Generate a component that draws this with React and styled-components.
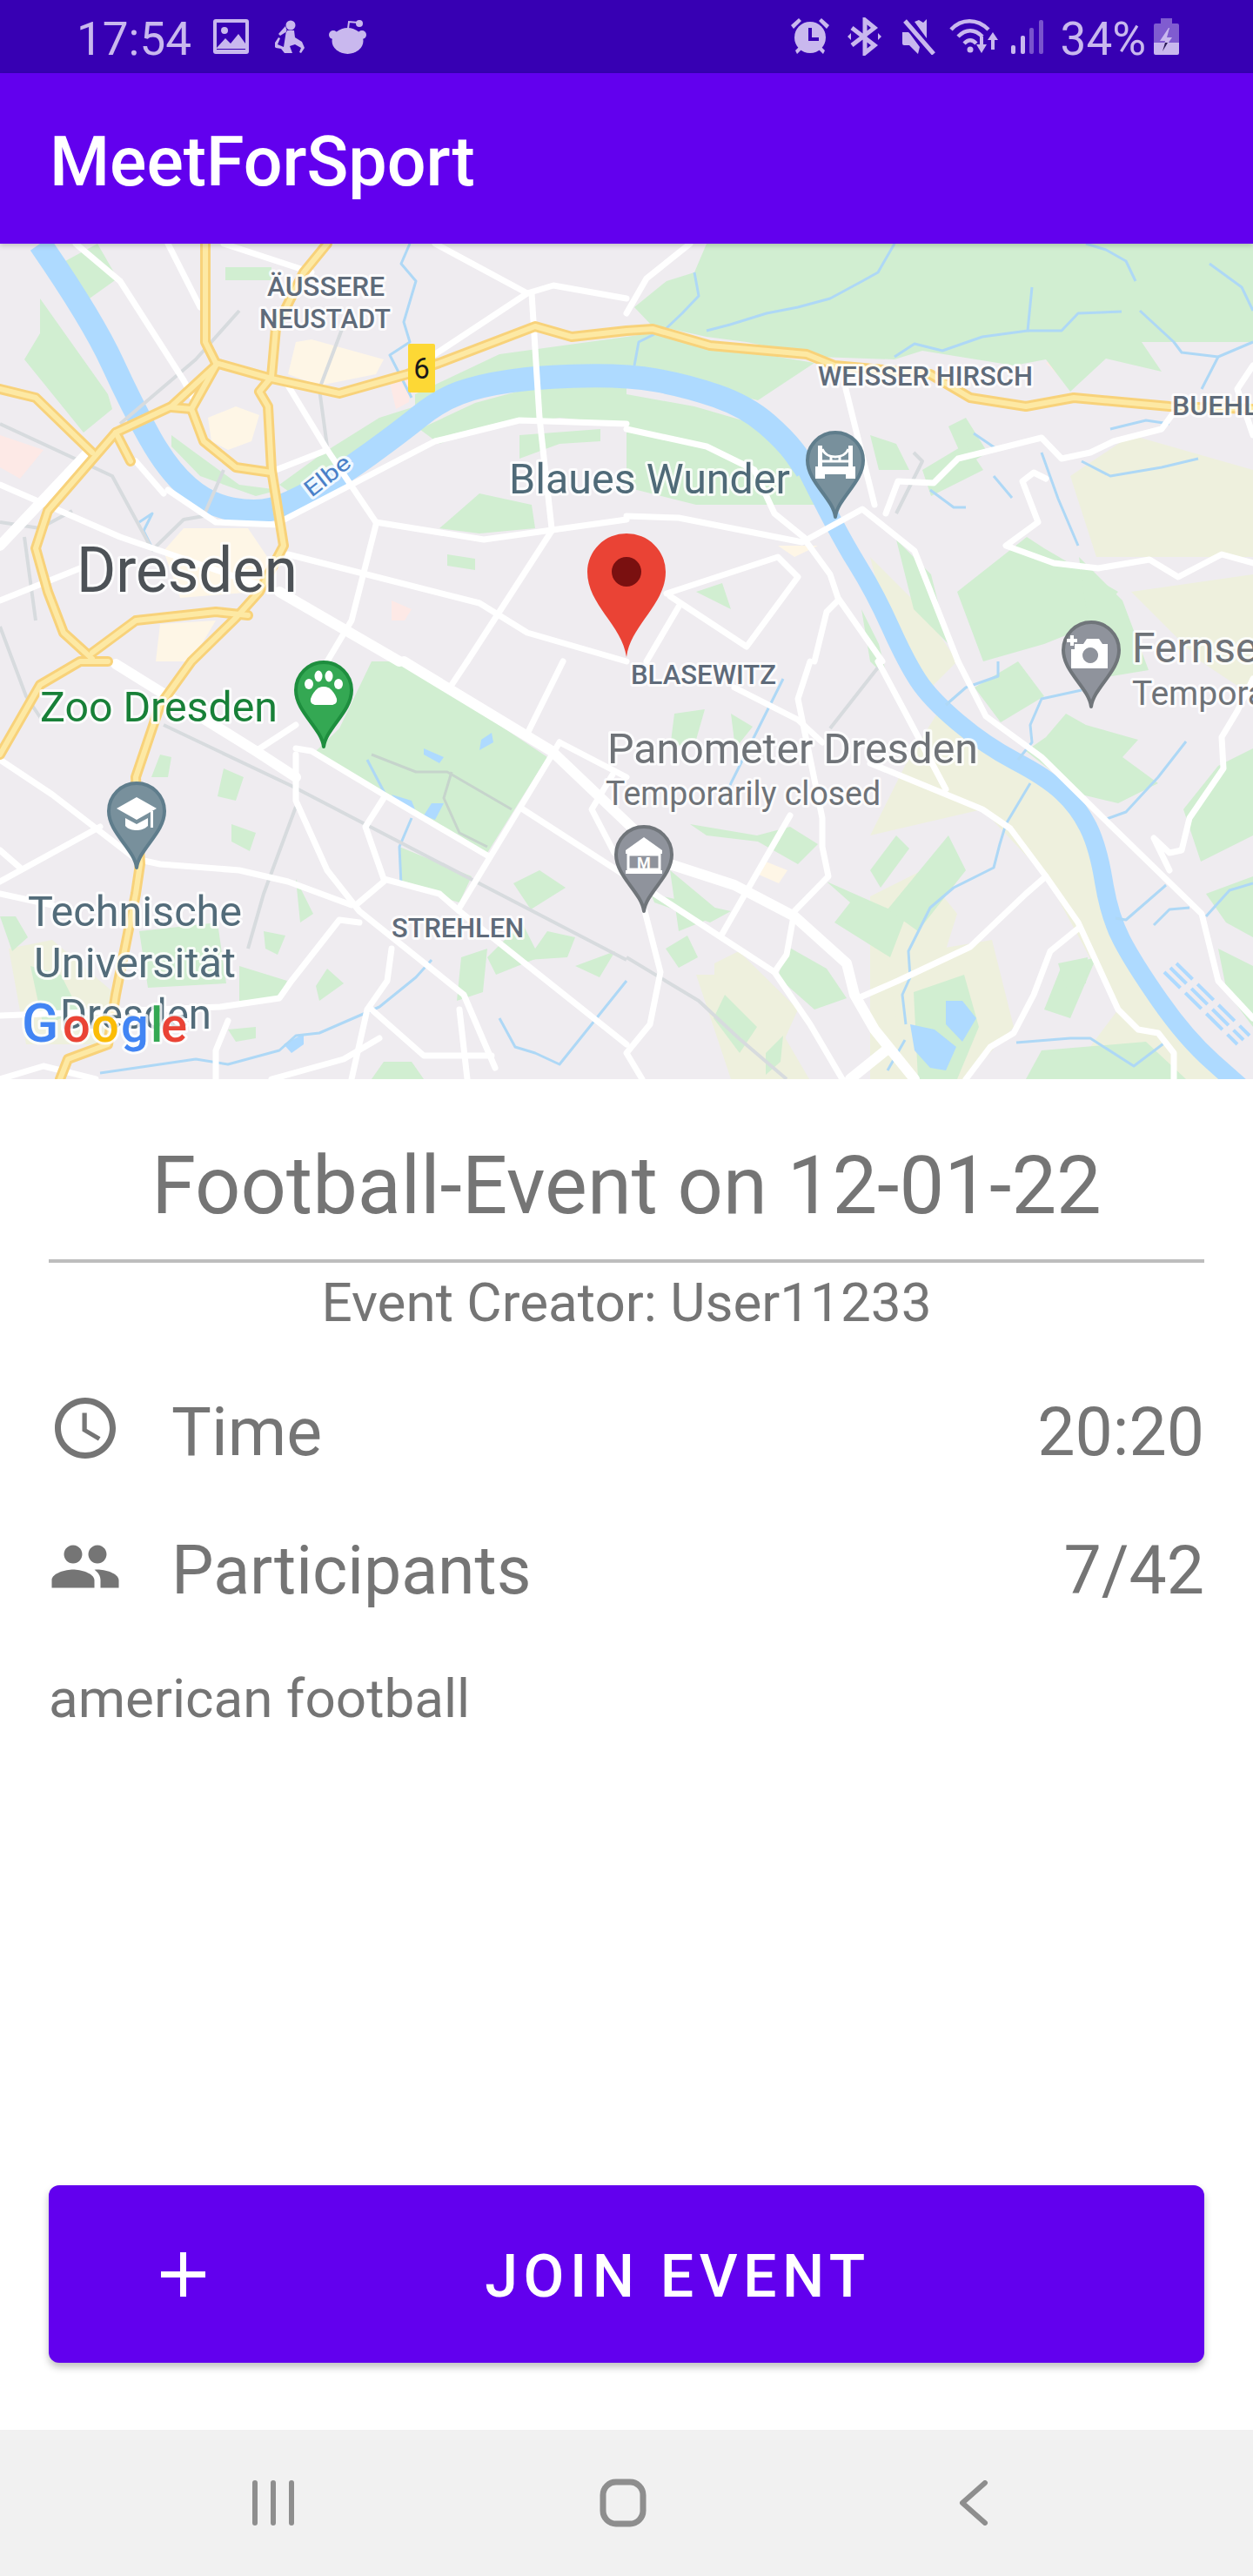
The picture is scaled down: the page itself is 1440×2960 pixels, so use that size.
import React from 'react';
import styled, { createGlobalStyle } from 'styled-components';
import { MdAccessTime, MdGroup } from 'react-icons/md';

const GlobalStyle = createGlobalStyle`
  html, body {
    margin: 0;
    padding: 0;
    background: #ffffff;
    font-family: Roboto, "Liberation Sans", sans-serif;
  }
`;

const Screen = styled.div`
  width: 1440px;
  height: 2960px;
  display: flex;
  flex-direction: column;
  overflow: hidden;
  background: #ffffff;
`;

const StatusBar = styled.div`
  height: 84px;
  flex: none;
  display: flex;
  align-items: center;
  justify-content: space-between;
  padding: 0 85px 0 88px;
  background: #3700b3;
  color: #c9b8ee;
`;

const StatusGroup = styled.div`
  display: flex;
  align-items: center;
`;

const StatusText = styled.span`
  font-size: 53px;
  font-weight: 400;
  line-height: 60px;
  padding-top: 6px;
  margin-left: ${(p) => p.$ml || 0}px;
`;

const StatusIcon = styled.svg`
  display: block;
  flex: none;
  margin-left: ${(p) => p.$ml || 0}px;
`;

const AppBar = styled.header`
  height: 196px;
  flex: none;
  position: relative;
  z-index: 2;
  display: flex;
  align-items: center;
  padding: 7px 0 0 57px;
  box-sizing: border-box;
  background: #6200ee;
  box-shadow: 0 2px 6px rgba(0, 0, 0, 0.2);
`;

const AppTitle = styled.h1`
  margin: 0;
  font-size: 79px;
  font-weight: 500;
  line-height: 92px;
  color: #ffffff;
`;

const MapFrame = styled.svg`
  display: block;
  width: 1440px;
  height: 960px;
  flex: none;
`;

const MapLabel = styled.text`
  font-family: Roboto, sans-serif;
  font-size: ${(p) => p.$size}px;
  font-weight: ${(p) => p.$weight || 400};
  fill: ${(p) => p.$color};
  stroke: rgba(255, 255, 255, 0.82);
  stroke-width: 6px;
  stroke-linejoin: round;
  paint-order: stroke;
`;

const Details = styled.main`
  flex: 1;
  display: flex;
  flex-direction: column;
  padding: 0 56px;
  color: #757575;
`;

const EventTitle = styled.h2`
  margin: 67px 0 0;
  font-size: 92px;
  font-weight: 400;
  line-height: 112px;
  text-align: center;
`;

const Divider = styled.hr`
  margin: 28px 0 0;
  height: 4px;
  border: none;
  background: #bdbdbd;
`;

const Creator = styled.div`
  margin-top: 11px;
  font-size: 62px;
  line-height: 70px;
  text-align: center;
`;

const InfoRow = styled.div`
  display: flex;
  align-items: center;
  height: 84px;
  margin-top: ${(p) => p.$mt}px;
`;

const InfoIcon = styled.span`
  width: 84px;
  height: 84px;
  flex: none;
  display: flex;
  font-size: 84px;
  color: #757575;
`;

const InfoLabel = styled.span`
  flex: 1;
  margin-left: 57px;
  padding-top: 10px;
  font-size: 77px;
  line-height: 88px;
`;

const InfoValue = styled.span`
  padding-top: 10px;
  font-size: 77px;
  line-height: 88px;
`;

const Description = styled.p`
  margin: 75px 0 0;
  font-size: 62px;
  line-height: 70px;
`;

const JoinButton = styled.button`
  margin: auto 0 77px;
  height: 204px;
  flex: none;
  display: flex;
  align-items: center;
  padding: 0 62px 0 129px;
  border: none;
  border-radius: 12px;
  background: #6200ee;
  color: #ffffff;
  font-family: Roboto, sans-serif;
  box-shadow: 0 5px 8px rgba(0, 0, 0, 0.25);
`;

const JoinLabel = styled.span`
  flex: 1;
  padding-top: 5px;
  text-align: center;
  font-size: 68px;
  font-weight: 500;
  letter-spacing: 6.5px;
  line-height: 80px;
`;

const NavBar = styled.nav`
  height: 168px;
  flex: none;
  display: flex;
  align-items: center;
  padding-left: 289px;
  background: #f1f1f1;
`;

const NavIcon = styled.svg`
  display: block;
  flex: none;
  margin-left: ${(p) => p.$ml || 0}px;
  fill: none;
  stroke: #8e8e8e;
  stroke-linecap: round;
  stroke-linejoin: round;
`;

// quadratic curve through midpoints, river and ponds look less jagged this way
const smooth = (pts) => {
  const p = pts.trim().split(/\s+/).map((s) => s.split(',').map(Number));
  let d = `M${p[0][0]} ${p[0][1]}`;
  for (let i = 1; i < p.length - 1; i++) {
    const mx = (p[i][0] + p[i + 1][0]) / 2;
    const my = (p[i][1] + p[i + 1][1]) / 2;
    d += ` Q${p[i][0]} ${p[i][1]} ${mx} ${my}`;
  }
  const last = p[p.length - 1];
  return `${d} L${last[0]} ${last[1]}`;
};

const cream = [
  '340,393 358,390 441,413 432,430 367,443 331,430',
  '239,480 271,467 298,477 289,507 262,517 243,507',
  '211,607 285,607 312,647 294,680 207,687 188,633',
  '184,717 248,713 220,760 179,760',
  '894,627 940,627 913,640',
  '880,990 905,1000 895,1015 872,1005',
];

const pink = [
  '0,500 50,517 23,550 0,537',
  '1202,417 1225,397 1243,415 1220,435',
  '450,690 473,700 465,713 450,713',
  '448,440 470,432 470,462 455,470',
];

const tan = [
  '1083,810 1239,927 1262,973 1275,1053 1303,1107 1363,1193 1418,1240 1225,1240 1285,1160 1202,1007 1129,930 1000,960 1040,880',
  '1000,1030 1060,1000 1100,1050 1040,1240 1000,1240',
  '1230,547 1300,500 1440,540 1440,640 1260,640',
  '800,1120 860,1120 930,1240 840,1240',
  '821,1107 849,1093 917,1160 899,1200 821,1143',
  '1020,1100 1140,1080 1165,1180 1110,1240 1040,1240',
  '10,1090 60,1080 130,1140 130,1200 30,1200',
  '1000,640 1060,700 1100,760 1060,800 1020,720',
  '1300,680 1440,660 1440,800 1380,760',
];

const green = [
  '812,280 1440,280 1440,393 1312,393 1335,427 1271,412 1230,450 1202,413 1165,420 1060,403 1028,413 940,410 858,393 812,387 748,373 729,353 766,323 798,313',
  '720,387 748,383 816,397 936,417 871,460 720,423',
  '477,453 574,407 720,387 720,423 620,423 551,437 477,467',
  '482,493 546,463 620,443 720,440 720,487 643,480 551,493 505,510',
  '720,453 798,467 867,487 908,520 927,557 936,580 800,580 780,575 720,560',
  '321,557 372,520 436,480 477,467 459,480 400,527 335,567',
  '197,500 220,517 275,557 321,563 294,570 230,547 197,513',
  '597,500 690,493 690,507 643,510 597,527',
  '514,637 546,642 546,655 514,650',
  '551,567 611,580 615,607 551,613 505,607',
  '46,343 124,453 129,470 96,497 28,413 46,383',
  '259,307 312,307 312,322 259,322',
  '75,300 112,280 135,320 100,345',
  '427,760 464,760 629,870 560,980 413,900 363,863 390,837',
  '459,973 542,1007 528,1037 459,1017',
  '257,883 280,893 271,920 250,915',
  '266,947 294,957 287,978 266,967',
  '303,1070 328,1075 319,1097 305,1090',
  '376,1113 395,1130 367,1150 363,1133',
  '275,1110 330,1127 321,1147 275,1150',
  '629,1070 661,1077 652,1100 606,1103',
  '707,1093 661,1110 689,1123',
  '184,867 197,870 193,893 174,893',
  '0,1053 18,1053 32,1077 14,1093',
  '262,1183 294,1180 294,1193 271,1197',
  '441,1220 473,1220 487,1240 427,1240',
  '1202,847 1225,820 1248,833 1308,850 1290,870 1331,900 1285,923 1243,913 1179,863',
  '950,1013 1041,1053 1023,1100 959,1060 977,1037',
  '904,1087 950,1113 973,1147 936,1160 894,1123',
  '1050,1140 1108,1120 1125,1180 1100,1240 1055,1240',
  '793,947 870,960 908,950 940,970 917,993 871,967 812,960',
  '748,1027 840,1047 816,1060 752,1037',
  '1386,1027 1440,1007 1440,1077 1409,1060',
  '1197,1207 1317,1197 1363,1240 1179,1240',
  '1020,1045 1090,960 1110,1000 1055,1070',
  '1180,617 1200,630 1285,680 1250,720 1200,740 1130,760 1100,680',
  '1030,620 1070,660 1090,740 1050,700',
  '1240,640 1290,690 1320,770 1260,780',
  '1120,790 1170,760 1200,800 1150,830',
  '1360,930 1400,880 1440,860 1440,960 1380,990',
  '1220,1110 1260,1100 1230,1170 1200,1160',
  '1000,500 1030,510 1045,540 1010,540',
  '1110,480 1135,520 1110,535 1090,490',
  '1060,540 1110,510 1130,540 1070,570',
  '770,1000 830,1050 780,1070',
  '800,550 830,560 810,580',
  '800,680 830,670 840,700',
  '833,1143 870,1180 850,1210 820,1170',
  '530,1100 560,1090 555,1140 525,1150',
  '35,1110 70,1120 90,1160 50,1180',
  '590,1015 620,1000 650,1020 610,1045',
  '1216,1107 1250,1100 1248,1130 1225,1135',
  '765,1090 790,1075 802,1100 780,1112',
  '775,820 810,815 800,850 770,860',
  '840,820 865,835 845,860',
  '880,1210 900,1190 897,1220 880,1235',
  '1000,1000 1030,960 1045,975 1012,1020',
  '990,700 1010,740 1020,780 1000,760',
  '1400,1090 1440,1110 1440,1180 1410,1140',
  '160,1070 250,1060 260,1130 170,1135',
  '340,1010 360,1050 345,1060',
  '560,1100 600,1060 620,1100 570,1120',
];

const ponds = [
  '1087,1150 1106,1150 1122,1170 1106,1197 1087,1177',
  '1046,1177 1074,1183 1099,1203 1087,1230 1069,1227 1051,1207',
  '496,923 510,923 500,942 487,937',
  '450,913 473,920 477,930 460,925',
  '487,860 510,870 505,877 487,867',
  '565,842 567,853 551,862 553,850',
  '326,1200 349,1188 349,1200 335,1210',
];

const streams = [
  '798,313 803,340 784,360 766,377 734,393 729,420',
  '1028,280 1009,313 991,323 954,343 917,353 881,360 839,373 812,380',
  '1248,280 1271,287 1294,300 1305,323',
  '1186,330 1181,380 1129,387 1083,403 1051,395 1028,410',
  '1181,380 1220,380 1239,360 1289,358',
  '1310,357 1349,393 1358,405 1400,410 1381,447',
  '1390,303 1427,330 1440,357',
  '1400,410 1440,393',
  '1243,530 1276,547 1335,537 1377,527',
  '1197,520 1216,573 1239,627',
  '1276,493 1317,483 1344,487',
  '1069,563 1096,583 1110,583',
  '1119,498 1147,517',
  '1142,547 1163,572',
  '471,280 461,303 478,323 464,370 471,393 448,408 473,457',
  '1156,947 1149,970 1142,997 1096,1020 1069,1043 1044,1093 1046,1123 1037,1143 1041,1177',
  '1184,900 1156,947',
  '1087,810 1110,790 1147,777 1147,760',
  '1243,793 1197,803 1184,833 1186,853 1170,873',
  '1363,852 1331,893 1294,933 1269,942',
  '1340,1017 1294,1057 1282,1055',
  '1326,1063 1344,1045 1367,1043',
  '1386,1053 1413,1023 1440,1015',
  '1168,1198 1230,1193 1253,1193 1303,1225 1340,1197',
  '473,940 459,973 461,1017',
  '496,1103 478,1123 436,1157 367,1187 340,1190 321,1207 262,1223 225,1217 115,1233',
  '574,1170 592,1203 615,1210 643,1223 720,1127',
  '422,873 445,917',
  '160,600 175,590 165,610 175,630',
  '900,780 840,900 830,925',
  '1020,1230 1040,1195',
];

const rails = [
  '188,833 335,903 720,1103',
  '720,1100 803,1150 849,1193 904,1240',
  '275,357 225,413 138,487',
  '0,487 129,547 174,630',
  '376,513 367,447 395,373',
  '174,633 211,597 234,593 257,540',
  '1009,767 954,837',
  '340,927 303,1027 285,1090',
  '0,600 46,607 83,587',
  '28,617 41,713',
  '1030,590 1060,530 1050,520',
  '0,720 30,800 50,830',
];

const parkPaths = [
  '427,867 478,887 514,887 588,930',
  '519,887 510,917 528,957 560,973',
];

const roads = [
  '87,280 138,323 211,437 225,463',
  '193,280 230,353',
  '257,280 358,313',
  '500,280 606,337 636,328 720,343',
  '606,337 500,407',
  '611,337 620,480 634,607',
  '331,443 376,517 432,600',
  '317,540 376,517',
  '321,600 500,507 597,483 720,487',
  '193,563 248,600 321,603',
  '156,530 188,567',
  '0,557 138,617 321,680',
  '0,690 92,653',
  '331,637 551,693 606,727 720,760',
  '432,600 556,620 720,597',
  '432,603 404,713 376,760',
  '634,610 537,760',
  '793,280 743,320 720,360',
  '720,493 812,513 867,540 890,590 927,620',
  '720,593 780,595 922,623 991,585 1051,633 1101,760',
  '927,623 954,660 963,687 1014,760',
  '766,682 894,640 917,663 858,743 770,685',
  '972,447 1005,580',
  '1018,590 1032,553 1073,555 1101,527 1197,503 1220,527 1253,520 1280,507 1335,493 1354,467',
  '1202,550 1188,543 1175,553 1193,600 1156,627 1211,647 1262,653 1321,643 1354,663 1404,637 1440,647',
  '1440,420 1422,447 1440,500',
  '963,690 950,703 936,760',
  '780,697 743,760',
  '931,760 917,803 945,940 945,973 952,1007 913,1047 904,1097 890,1117',
  '844,790 917,827 945,853',
  '1009,760 1041,820 1087,907',
  '1000,877 1129,930 1161,952 1202,1007 1239,1060 1285,1160 1308,1183 1331,1187 1349,1210 1349,1240',
  '752,1027 890,1117 931,1177 968,1240',
  '830,1073 908,937',
  '986,1147 1032,1127 1115,1088 1179,1027 1202,1007',
  '1239,1067 1207,1093 1188,1143 1165,1187 1138,1203 1110,1240',
  '741,1047 759,1117 747,1177 720,1210 738,1240',
  '1101,760 1133,823 1197,870 1271,943 1381,1050 1400,1127 1440,1170',
  '1440,780 1422,817 1404,847 1406,883 1367,940 1358,977 1344,980 1326,963 1344,1000',
  '537,760 519,787',
  '647,760 606,843',
  '643,853 528,1043',
  '601,930 720,1007',
  '643,853 720,893',
  '704,890 680,930 706,980',
  '0,873 60,913 156,987 184,993 275,1000 331,1013 404,1040',
  '0,1013 115,950',
  '0,977 23,997',
  '0,1027 60,1040',
  '294,863 340,833',
  '340,860 358,863 441,913 560,983',
  '340,867 340,920 376,1000 413,1047 533,1143 569,1227',
  '441,917 420,950 441,1010 505,1027 528,1047 720,1200',
  '441,1013 409,1040',
  '413,1060 390,1057 335,1127 321,1147 253,1157 0,1167',
  '450,1090 445,1127 422,1160 404,1240',
  '427,1160 487,1213 565,1213',
  '248,1240 248,1207 262,1173',
  '312,1240 395,1217 436,1193',
  '528,1160 537,1240',
  '0,1240 50,1225 110,1240',
];

const wideRoads = [
  '459,760 321,680',
  '0,627 101,520',
  '133,763 294,863 340,893',
  '464,760 634,863 720,945 770,993 844,1017 913,1053 973,1107 982,1143 1005,1183 1051,1240',
  '1018,1207 977,1240',
];

const highways = [
  '236,280 236,393 248,417 312,435 390,452 468,430 505,417 615,375 657,387 720,380 750,378 816,397 927,407 959,420 1069,430 1115,457 1179,467 1234,457 1344,467 1440,470',
  '376,280 349,313 317,377 312,433 298,450 308,467 312,540 326,627 298,680 271,710 220,760 184,810 156,893 161,993 156,1027 133,1143 124,1200 78,1217 69,1240',
  '248,420 197,467 133,497 55,587 41,630 55,680 73,727 106,757',
  '124,760 92,760 46,787 0,867',
  '0,447 41,457 106,520',
  '220,470 234,507 271,537 312,543',
  '248,420 220,470 197,468',
  '106,750 156,713 248,703 285,707',
  '133,497 150,530',
];

const Poly = ({ sets, ...rest }) => (
  <g {...rest}>
    {sets.map((pts) => (
      <polyline key={pts} points={pts} />
    ))}
  </g>
);

const Shapes = ({ sets, fill }) => (
  <g fill={fill}>
    {sets.map((pts) => (
      <polygon key={pts} points={pts} />
    ))}
  </g>
);

const Pin = ({ x, y, fill, edge, children }) => (
  <g transform={`translate(${x - 35} ${y})`}>
    <path
      d="M35 100C32 78 3 60 3 35a32 32 0 1 1 64 0C67 60 38 78 35 100Z"
      fill={fill}
      stroke={edge}
      strokeWidth="4"
      strokeLinejoin="round"
    />
    {children}
  </g>
);

const MapView = () => (
  <MapFrame viewBox="0 280 1440 960">
    <rect x="0" y="280" width="1440" height="960" fill="#efecf0" />
    <Shapes sets={tan} fill="#eef0dd" />
    <Shapes sets={cream} fill="#fef6e6" />
    <Shapes sets={pink} fill="#fde9e6" />
    <Shapes sets={green} fill="#d1eed1" />
    <path
      d={smooth('46,280 106,367 152,467 193,540 239,580 294,590 331,580 390,547 459,497 505,460 551,443 620,433 720,431 789,443 858,467 904,507 927,540')}
      fill="none"
      stroke="#aedaff"
      strokeWidth="27"
    />
    <path
      d={smooth('922,530 963,613 1005,680 1041,760 1069,803 1133,857 1202,893 1239,927 1262,973 1275,1053 1303,1107 1363,1193 1425,1248')}
      fill="none"
      stroke="#aedaff"
      strokeWidth="21"
    />
    <Shapes sets={ponds} fill="#aedaff" />
    <polyline points="1338,1117 1422,1200" fill="none" stroke="#aedaff" strokeWidth="4" strokeDasharray="26 8" />
    <polyline points="1345,1112 1429,1195" fill="none" stroke="#aedaff" strokeWidth="4" strokeDasharray="26 8" />
    <polyline points="1352,1107 1436,1190" fill="none" stroke="#aedaff" strokeWidth="4" strokeDasharray="26 8" />
    <Poly sets={streams} fill="none" stroke="#aed8f6" strokeWidth="3" strokeLinejoin="round" />
    <Poly sets={rails} fill="none" stroke="#d7dbde" strokeWidth="4" strokeLinejoin="round" />
    <Poly sets={parkPaths} fill="none" stroke="#c6d4cc" strokeWidth="3" strokeLinejoin="round" />
    <Poly sets={roads} fill="none" stroke="#ffffff" strokeWidth="7" strokeLinejoin="round" strokeLinecap="round" />
    <Poly sets={wideRoads} fill="none" stroke="#ffffff" strokeWidth="12" strokeLinejoin="round" strokeLinecap="round" />
    <Poly sets={highways} fill="none" stroke="#f8d27a" strokeWidth="12" strokeLinejoin="round" strokeLinecap="round" />
    <Poly sets={highways} fill="none" stroke="#fde9a4" strokeWidth="6" strokeLinejoin="round" strokeLinecap="round" />

    <rect x="469" y="395" width="31" height="56" rx="2" fill="#fdd835" />
    <text x="484.5" y="435" fontFamily="Roboto, sans-serif" fontSize="33" textAnchor="middle" fill="#1a1a1a">6</text>

    <MapLabel x="307" y="340" textLength="135" lengthAdjust="spacingAndGlyphs" $size="32" $weight="500" $color="#5f6b7a">ÄUSSERE</MapLabel>
    <MapLabel x="298" y="377" textLength="151" lengthAdjust="spacingAndGlyphs" $size="32" $weight="500" $color="#5f6b7a">NEUSTADT</MapLabel>
    <MapLabel x="88" y="680" textLength="254" lengthAdjust="spacingAndGlyphs" $size="72" $color="#4d5257">Dresden</MapLabel>
    <MapLabel x="585" y="567" textLength="323" lengthAdjust="spacingAndGlyphs" $size="49" $color="#4f6a78">Blaues Wunder</MapLabel>
    <MapLabel transform="translate(358 572) rotate(-38)" textLength="60" lengthAdjust="spacingAndGlyphs" $size="26" $color="#4a80c8">Elbe</MapLabel>
    <MapLabel x="940" y="443" textLength="247" lengthAdjust="spacingAndGlyphs" $size="32" $weight="500" $color="#5f6b7a">WEISSER HIRSCH</MapLabel>
    <MapLabel x="1347" y="477" $size="32" $weight="500" $color="#5f6b7a">BUEHL</MapLabel>
    <MapLabel x="725" y="786" textLength="167" lengthAdjust="spacingAndGlyphs" $size="32" $weight="500" $color="#5f6b7a">BLASEWITZ</MapLabel>
    <MapLabel x="450" y="1077" textLength="152" lengthAdjust="spacingAndGlyphs" $size="32" $weight="500" $color="#5f6b7a">STREHLEN</MapLabel>
    <MapLabel x="698" y="877" textLength="426" lengthAdjust="spacingAndGlyphs" $size="48" $color="#6f7378">Panometer Dresden</MapLabel>
    <MapLabel x="696" y="925" textLength="316" lengthAdjust="spacingAndGlyphs" $size="39" $color="#6f7378">Temporarily closed</MapLabel>
    <MapLabel x="1301" y="761" $size="48" $color="#6f7378">Fernse</MapLabel>
    <MapLabel x="1301" y="810" $size="39" $color="#6f7378">Temporar</MapLabel>
    <MapLabel x="46" y="829" textLength="273" lengthAdjust="spacingAndGlyphs" $size="49" $color="#188038">Zoo Dresden</MapLabel>
    <MapLabel x="32" y="1064" textLength="246" lengthAdjust="spacingAndGlyphs" $size="49" $color="#536c7a">Technische</MapLabel>
    <MapLabel x="39" y="1123" textLength="232" lengthAdjust="spacingAndGlyphs" $size="49" $color="#536c7a">Universität</MapLabel>
    <MapLabel x="69" y="1182" textLength="174" lengthAdjust="spacingAndGlyphs" $size="49" $color="#536c7a">Dresden</MapLabel>

    <Pin x={960} y={494} fill="#78909c" edge="#5f7d8c">
      <g fill="#ffffff">
        <rect x="15" y="18" width="5" height="27" />
        <rect x="50" y="18" width="5" height="27" />
        <rect x="12" y="42" width="46" height="9" />
        <rect x="12" y="51" width="11" height="5" />
        <rect x="47" y="51" width="11" height="5" />
      </g>
      <path d="M20 22C25 34 45 34 50 22M30 29v6M40 29v6M20 36h30" fill="none" stroke="#ffffff" strokeWidth="3" />
    </Pin>
    <Pin x={1254} y={712} fill="#8f939c" edge="#70757a">
      <path
        fill="#ffffff"
        d="M16 28h10l4-6h14l4 6h6v28H12V34h4zM34 32a9 9 0 1 0 .1 0zM11 18h4v4h4v4h-4v4h-4v-4H7v-4h4z"
        fillRule="evenodd"
      />
    </Pin>
    <Pin x={740} y={947} fill="#8f939c" edge="#70757a">
      <path fill="#ffffff" d="M35 15L56 30v4H14v-4zM14 53h42v4H14z" />
      <rect x="17" y="35" width="36" height="17" fill="none" stroke="#ffffff" strokeWidth="3" />
      <text x="35" y="51" fontFamily="Roboto, sans-serif" fontSize="18" fontWeight="700" textAnchor="middle" fill="#ffffff">M</text>
    </Pin>
    <Pin x={372} y={758} fill="#34a853" edge="#1e8e3e">
      <g fill="#ffffff">
        <ellipse cx="18" cy="28" rx="5" ry="6" />
        <ellipse cx="29" cy="19" rx="4.5" ry="6.5" />
        <ellipse cx="41" cy="19" rx="4.5" ry="6.5" />
        <ellipse cx="52" cy="28" rx="5" ry="6" />
        <path d="M35 31c8 0 13 8 15 14 1 5-3 7-6 7H26c-3 0-7-2-6-7 2-6 7-14 15-14z" />
      </g>
    </Pin>
    <Pin x={157} y={897} fill="#78909c" edge="#5f7d8c">
      <path fill="#ffffff" d="M35 19L58 32 35 45 12 32zM22 43l13 7 13-7v9c-4 4-9 5-13 5s-10-1-13-5z" />
      <rect x="51" y="35" width="3" height="19" fill="#ffffff" />
    </Pin>

    <g transform="translate(675 613)">
      <path d="M45 142C40 105 0 82 0 44a45 44 0 1 1 90 0C90 82 50 105 45 142Z" fill="#ea4335" />
      <circle cx="45" cy="44" r="17" fill="#7a1010" />
    </g>

    <MapLabel y="1197" $size="62" $weight="500" $color="#4285f4">
      <tspan x="25" fill="#4285f4">G</tspan>
      <tspan x="72" fontSize="56" fill="#ea4335">o</tspan>
      <tspan x="105" fontSize="56" fill="#fbbc05">o</tspan>
      <tspan x="139" fontSize="56" fill="#4285f4">g</tspan>
      <tspan x="173" fontSize="56" fill="#34a853">l</tspan>
      <tspan x="185" fontSize="56" fill="#ea4335">e</tspan>
    </MapLabel>
  </MapFrame>
);

const ICON = '#c9b8ee';
const BAR = '#3700b3';

const App = () => (
  <>
    <GlobalStyle />
    <Screen>
      <StatusBar>
        <StatusGroup>
          <StatusText>17:54</StatusText>
          <StatusIcon $ml={25} width="41" height="40" viewBox="0 0 41 40">
            <rect width="41" height="40" rx="3" fill={ICON} />
            <rect x="4" y="4" width="33" height="31" fill={BAR} />
            <circle cx="13" cy="13" r="4" fill={ICON} />
            <path d="M4 33l10-11 6 6 9-11 8 11v6H4z" fill={ICON} />
          </StatusIcon>
          <StatusIcon $ml={30} width="34" height="39" viewBox="0 0 34 39" fill={ICON}>
            <circle cx="18" cy="6" r="5.5" />
            <path d="M12 7L4 16l2 2 8-5zM13 12h9l1 8 8 5 3 7-4 6-2-1 2-5-7-4-6 2 3 8h-9l-4-5-6-1-3-3 6-9 2 1-3 7 7 3z" />
          </StatusIcon>
          <StatusIcon $ml={28} width="43" height="39" viewBox="0 0 43 39" fill={ICON}>
            <ellipse cx="21.5" cy="24" rx="18" ry="15" />
            <circle cx="5" cy="17" r="5" />
            <circle cx="38" cy="17" r="5" />
            <circle cx="35" cy="4" r="4" />
            <path d="M22 10l1-8 11 1" fill="none" stroke={ICON} strokeWidth="2" />
          </StatusIcon>
        </StatusGroup>
        <StatusGroup>
          <StatusIcon width="46" height="42" viewBox="0 0 46 42" fill={ICON}>
            <circle cx="23" cy="22" r="18" />
            <path d="M21 11h4v11h8v4H21z" fill={BAR} />
            <path d="M1 8L10 0l3 3-9 9zM45 8L36 0l-3 3 9 9zM6 37l5-5 3 3-6 6zM40 37l-5-5-3 3 6 6z" />
          </StatusIcon>
          <StatusIcon $ml={20} width="39" height="44" viewBox="0 0 39 44" fill="none" stroke={ICON} strokeWidth="5">
            <path d="M5 12l26 20-11 9V3l11 9L5 32" />
            <path d="M0 22l4-4v8zM39 22l-4-4v8z" fill={ICON} stroke="none" />
          </StatusIcon>
          <StatusIcon $ml={24} width="38" height="42" viewBox="0 0 38 42" fill={ICON}>
            <path d="M0 16h7l2 2 11 15-2 8-10-10H2a2 2 0 0 1-2-2zM28 1v22L14 4l5-2 5 3z" />
            <path d="M3 3l33 38" stroke={ICON} strokeWidth="5" />
          </StatusIcon>
          <StatusIcon $ml={16} width="56" height="42" viewBox="0 0 56 42" fill="none" stroke={ICON} strokeWidth="4.5">
            <path d="M2 13C14 0 32 0 45 13M10 21c9-9 19-9 28 0M17 29c5-5 9-5 14 0" />
            <circle cx="24" cy="36" r="3.5" fill={ICON} stroke="none" />
            <path d="M37 21v15" strokeWidth="4" />
            <path d="M31 30h12l-6 10z" fill={ICON} stroke="none" />
            <path d="M50 21v15" strokeWidth="4" />
            <path d="M44 25h12l-6-9z" fill={ICON} stroke="none" />
          </StatusIcon>
          <StatusIcon $ml={15} width="37" height="39" viewBox="0 0 37 39" fill={ICON}>
            <rect y="29" width="5" height="10" rx="2" />
            <rect x="11" y="18" width="5" height="21" rx="2" />
            <rect x="21" y="9" width="5" height="30" rx="2" opacity="0.45" />
            <rect x="32" width="5" height="39" rx="2" opacity="0.45" />
          </StatusIcon>
          <StatusText $ml={20}>34%</StatusText>
          <StatusIcon $ml={9} width="29" height="42" viewBox="0 0 29 42">
            <path d="M8 0h13v6h6a2 2 0 0 1 2 2v20H0V8a2 2 0 0 1 2-2h6z" fill={ICON} opacity="0.5" />
            <path d="M0 28h29v12a2 2 0 0 1-2 2H2a2 2 0 0 1-2-2z" fill={ICON} />
            <path d="M17 11L7 26h6l-3 12 11-16h-6l3-11z" fill={ICON} />
            <path d="M13 28h3l-6 10z" fill="#2a1a55" />
          </StatusIcon>
        </StatusGroup>
      </StatusBar>

      <AppBar>
        <AppTitle>MeetForSport</AppTitle>
      </AppBar>

      <MapView />

      <Details>
        <EventTitle>Football-Event on 12-01-22</EventTitle>
        <Divider />
        <Creator>Event Creator: User11233</Creator>
        <InfoRow $mt={67}>
          <InfoIcon>
            <MdAccessTime />
          </InfoIcon>
          <InfoLabel>Time</InfoLabel>
          <InfoValue>20:20</InfoValue>
        </InfoRow>
        <InfoRow $mt={75}>
          <InfoIcon>
            <MdGroup />
          </InfoIcon>
          <InfoLabel>Participants</InfoLabel>
          <InfoValue>7/42</InfoValue>
        </InfoRow>
        <Description>american football</Description>

        <JoinButton>
          <svg width="51" height="51" viewBox="0 0 51 51">
            <path d="M22 0h7v22h22v7H29v22h-7V29H0v-7h22z" fill="#ffffff" />
          </svg>
          <JoinLabel>JOIN EVENT</JoinLabel>
        </JoinButton>
      </Details>

      <NavBar>
        <NavIcon width="50" height="54" viewBox="0 0 50 54" strokeWidth="6">
          <path d="M4 4v46M25 4v46M46 4v46" />
        </NavIcon>
        <NavIcon $ml={350} width="54" height="56" viewBox="0 0 54 56" strokeWidth="7">
          <rect x="4" y="4" width="46" height="48" rx="15" />
        </NavIcon>
        <NavIcon $ml={359} width="34" height="52" viewBox="0 0 34 52" strokeWidth="6">
          <path d="M30 3L4 26l26 23" />
        </NavIcon>
      </NavBar>
    </Screen>
  </>
);

export default App;
